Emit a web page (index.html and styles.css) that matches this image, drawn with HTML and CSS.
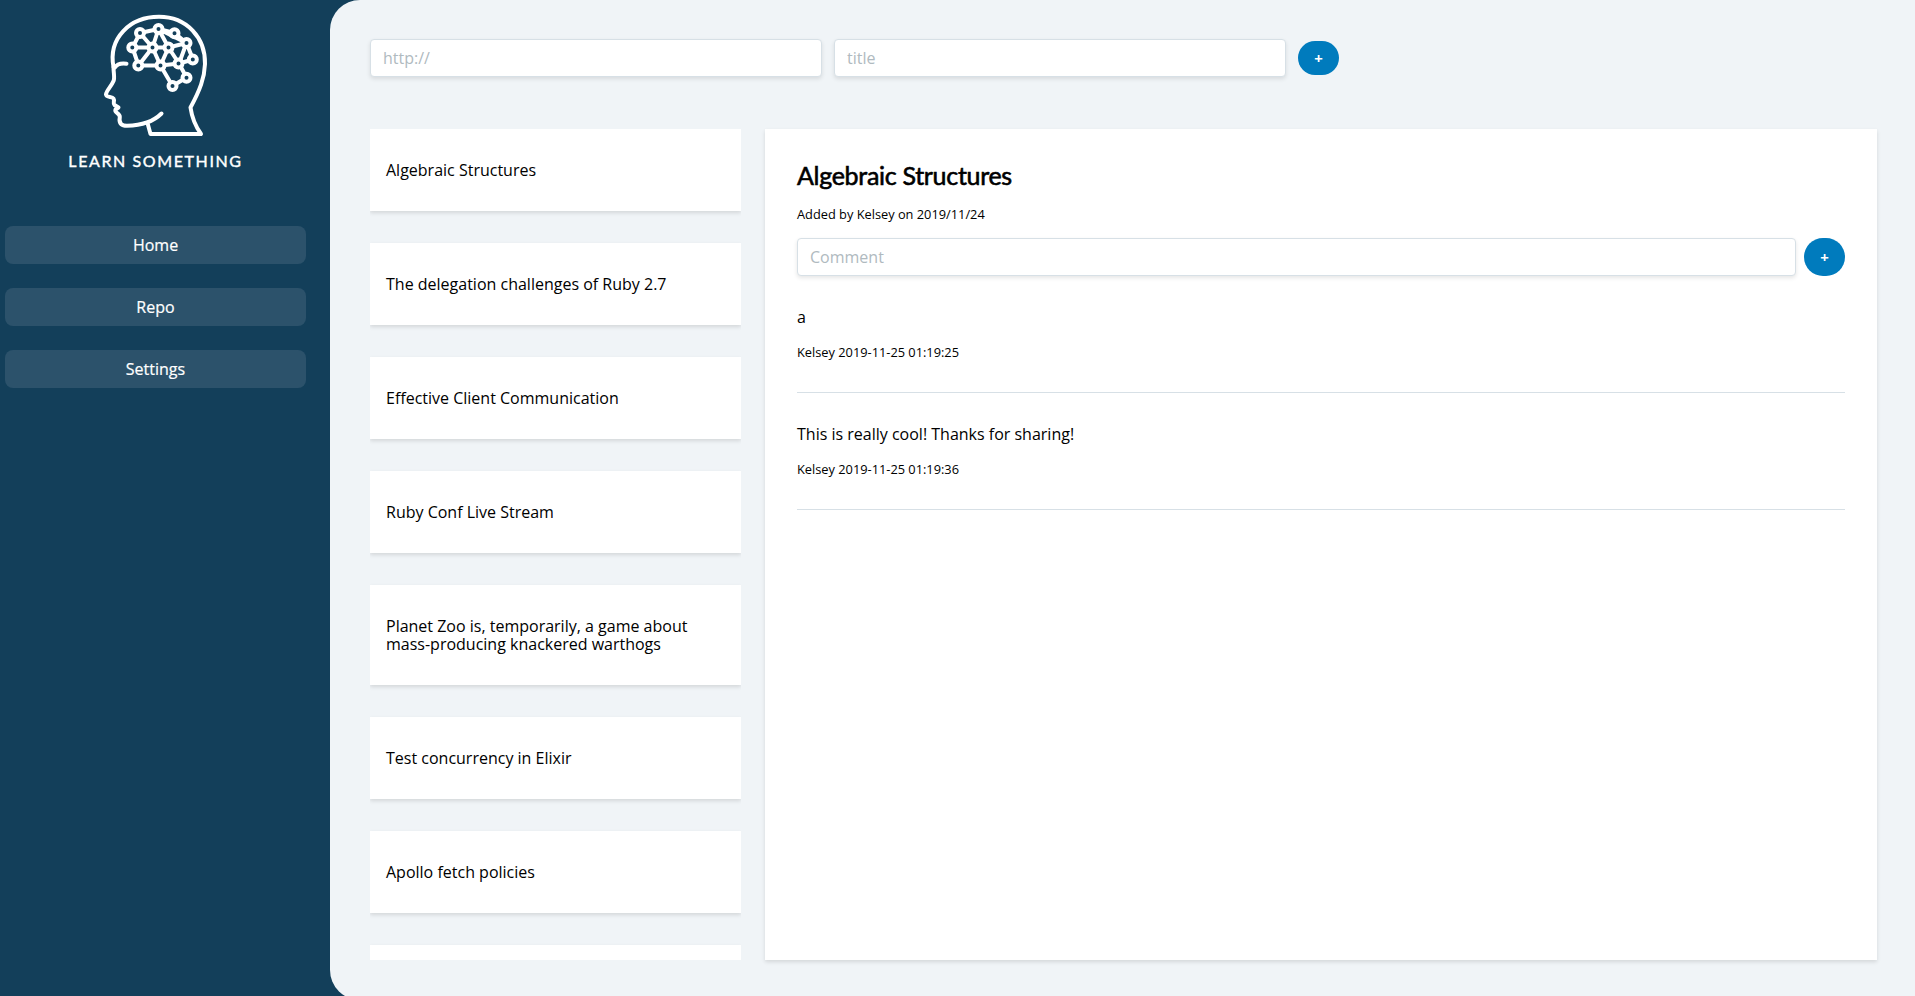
FILE: index.html
```html
<!DOCTYPE html>
<html lang="en">
<head>
<meta charset="utf-8">
<title>Learn Something</title>
<link rel="stylesheet" href="styles.css">
</head>
<body>
<div class="app">
  <aside class="sidebar">
    <svg class="logo" viewBox="0 0 112 130" fill="none" stroke="#fff" stroke-linecap="round" stroke-linejoin="round">
      <path stroke-width="4" d="M13.500 57C8 28 30 6.800 59 6.800C87 6.800 105.500 28 105 54C104.500 68 100 80 90.500 97.500C92 108 96 117 101 124L50.500 124L47.500 113"/>
      <path stroke-width="4" d="M13.500 57C13.500 63 15 68 13.500 71C11 77 6 81 6 84.500C6.500 88 12 86 13.500 88.500C15 91 12.500 93 14.500 95L18.500 97.500L15.500 99.500C14 103 20 103 19.800 107C18.500 114 22 115.800 27 115.800C39 115.500 52 113 61.500 103.500M14.500 58C17 54 21 53 26.500 53.800"/>
      <path stroke-width="4" d="M40 23L58.500 19L74.500 23L86.500 33L93 49.500L79 53.500L60.500 55.500L38.500 55.500L32.500 37.500L40 23M32.500 37.500L68.500 37.500L86.500 33L79 53.500L86.500 67.500L72.500 76L60.500 55.500L68.500 37.500L58.500 19L52.500 37.500L60.500 55.500M40 23L52.500 37.500L38.500 55.500M58.500 19L86.500 33M68.500 37.500L79 53.500"/>
      <g class="logo-nodes" stroke-width="4">
        <circle cx="40" cy="23" r="4"/><circle cx="58.500" cy="19" r="4"/><circle cx="74.500" cy="23.300" r="4"/>
        <circle cx="86.500" cy="33" r="4"/><circle cx="92.800" cy="49.500" r="4"/><circle cx="78.500" cy="53.500" r="4"/>
        <circle cx="60.500" cy="55.500" r="4"/><circle cx="38.300" cy="55.500" r="4"/><circle cx="32.300" cy="37.500" r="4"/>
        <circle cx="52.500" cy="37.500" r="4"/><circle cx="68.500" cy="37.500" r="4"/><circle cx="86.500" cy="67.800" r="4"/>
        <circle cx="72.500" cy="76" r="4"/>
      </g>
    </svg>
    <div class="brand">LEARN SOMETHING</div>
    <nav class="nav">
      <a class="nav-link">Home</a>
      <a class="nav-link">Repo</a>
      <a class="nav-link">Settings</a>
    </nav>
  </aside>
  <main class="main">
    <form class="add-form">
      <input class="field" placeholder="http://">
      <input class="field" placeholder="title">
      <button class="add" type="button">+</button>
    </form>
    <div class="content">
      <div class="list">
        <div class="card">Algebraic Structures</div>
        <div class="card">The delegation challenges of Ruby 2.7</div>
        <div class="card">Effective Client Communication</div>
        <div class="card">Ruby Conf Live Stream</div>
        <div class="card">Planet Zoo is, temporarily, a game about mass-producing knackered warthogs</div>
        <div class="card">Test concurrency in Elixir</div>
        <div class="card">Apollo fetch policies</div>
        <div class="card"></div>
      </div>
      <section class="detail">
        <h1 class="title">Algebraic Structures</h1>
        <p class="meta">Added by Kelsey on 2019/11/24</p>
        <form class="comment-form">
          <input class="field" placeholder="Comment">
          <button class="add" type="button">+</button>
        </form>
        <article class="comment">
          <p class="comment-text">a</p>
          <p class="meta">Kelsey 2019-11-25 01:19:25</p>
        </article>
        <article class="comment">
          <p class="comment-text">This is really cool! Thanks for sharing!</p>
          <p class="meta">Kelsey 2019-11-25 01:19:36</p>
        </article>
      </section>
    </div>
  </main>
</div>
</body>
</html>
```
FILE: styles.css
```css
* { box-sizing: border-box; }
body {
  margin: 0;
  height: 996px;
  overflow: hidden;
  background: #133f5a;
  color: #000;
  font: 16px/18px "Open Sans", sans-serif;
}
p, h1 { margin: 0; }
.app { display: flex; height: 1000px; }
.sidebar {
  display: flex;
  flex-direction: column;
  flex: none;
  width: 330px;
  padding: 10px 24px 0 5px;
}
.logo { width: 112px; height: 130px; margin-left: 95px; }
.logo-nodes { fill: #133f5a; }
.brand {
  margin-top: 11px;
  color: #fff;
  font: 400 16px/20px Lato, sans-serif;
  letter-spacing: 1.6px;
  text-align: center;
  -webkit-text-stroke: .4px #fff;
}
.nav { display: flex; flex-direction: column; gap: 24px; margin-top: 55px; }
.nav-link {
  height: 38px;
  border-radius: 8px;
  background: #2c526b;
  color: #fff;
  line-height: 38px;
  text-align: center;
  -webkit-text-stroke: .2px #fff;
}
.main {
  flex: 1;
  min-width: 0;
  padding: 39px 38px 40px 40px;
  border-radius: 30px 0 0 30px;
  background: #f0f4f7;
}
.add-form { display: flex; align-items: center; gap: 12px; height: 38px; }
.add-form .field { width: 452px; }
.add-form .add { height: 34px; }
.field {
  height: 38px;
  padding: 0 12px;
  border: 1px solid #d7e0e6;
  border-radius: 4px;
  background: #fff;
  box-shadow: 0 2px 4px rgba(0, 0, 0, .1);
  font: 16px "Open Sans", sans-serif;
}
.field::placeholder { color: #b0bac0; opacity: 1; }
.add {
  width: 41px;
  height: 38px;
  padding: 0;
  border: 0;
  border-radius: 50px;
  background: #007bbd;
  color: #fff;
  font: 700 15px "Open Sans", sans-serif;
}
.content { display: flex; gap: 24px; height: 831px; margin-top: 52px; }
.list {
  display: flex;
  flex-direction: column;
  flex: none;
  gap: 32px;
  width: 371px;
  overflow: hidden;
}
.card {
  flex: none;
  min-height: 82px;
  padding: 32px 16px;
  background: #fff;
  box-shadow: 0 2px 4px rgba(0, 0, 0, .12);
}
.detail {
  flex: 1;
  padding: 32px;
  background: #fff;
  box-shadow: 0 2px 4px rgba(0, 0, 0, .12);
}
.title {
  font: 400 25px/29px Lato, sans-serif;
  letter-spacing: -.3px;
  -webkit-text-stroke: .6px #000;
}
.meta { font-size: 12.8px; line-height: 15px; }
.title + .meta { margin-top: 17px; }
.comment-form { display: flex; gap: 8px; margin-top: 16px; }
.comment-form .field { flex: 1; }
.comment { padding: 32px 0; border-bottom: 1px solid #d7e0e6; }
.comment .meta { margin-top: 19px; }
```
